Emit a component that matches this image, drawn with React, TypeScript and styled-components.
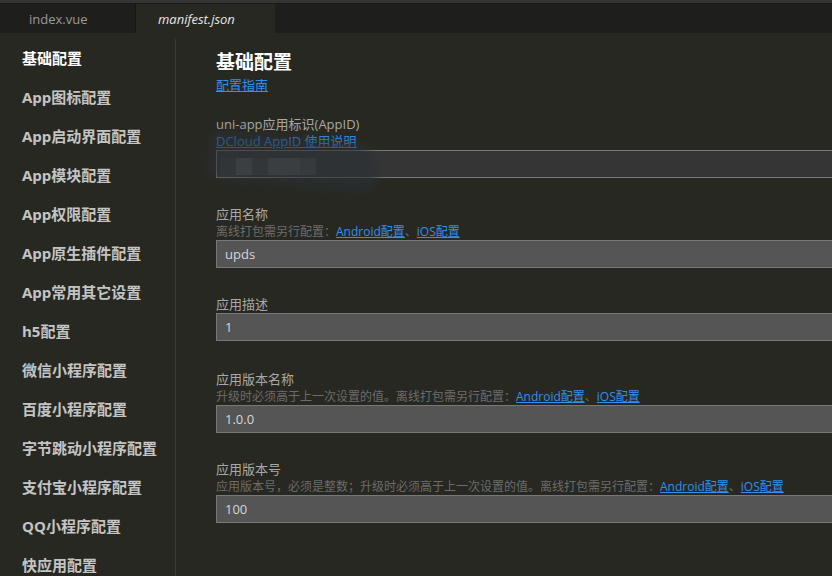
import React from 'react';
import styled, { createGlobalStyle } from 'styled-components';

const GlobalStyle = createGlobalStyle`
  html, body {
    margin: 0;
    padding: 0;
    background: #272822;
    overflow: hidden;
  }
  body {
    font-family: "Open Sans", "Noto Sans CJK SC", sans-serif;
  }
`;

const Window = styled.div`
  width: 832px;
  height: 576px;
  display: flex;
  flex-direction: column;
  background: #272822;
  overflow: hidden;
`;

const TopStrip = styled.div`
  height: 3px;
  background: #343434;
  border-bottom: 1px solid #1a1a18;
`;

const TabBar = styled.div`
  height: 29px;
  display: flex;
  background: #1e1f1c;
`;

const Tab = styled.div<{ $active?: boolean }>`
  box-sizing: border-box;
  width: ${(p) => (p.$active ? '139px' : '136px')};
  padding-left: ${(p) => (p.$active ? '22px' : '29px')};
  display: flex;
  align-items: center;
  font-size: 13px;
  font-style: ${(p) => (p.$active ? 'italic' : 'normal')};
  color: ${(p) => (p.$active ? '#e6e6e6' : '#9a9a9a')};
  background: ${(p) => (p.$active ? '#272822' : '#1e1f1c')};
  border-right: 1px solid ${(p) => (p.$active ? '#272822' : '#151613')};
`;

const Body = styled.div`
  flex: 1;
  display: flex;
  min-height: 0;
`;

const Sidebar = styled.nav`
  width: 175px;
  flex: 0 0 175px;
  padding-top: 6px;
  display: flex;
  flex-direction: column;
  border-right: 1px solid #3b3c37;
  margin-top: 6px;
`;

const NavItem = styled.div<{ $active?: boolean }>`
  height: 39px;
  line-height: 39px;
  padding-left: 22px;
  font-size: 15px;
  font-weight: bold;
  white-space: nowrap;
  color: ${(p) => (p.$active ? '#ffffff' : '#c4c4c4')};
  margin-top: ${(p) => (p.$active ? '-6px' : '0')};
`;

const Main = styled.main`
  flex: 1;
  min-width: 0;
  padding: 17px 0 0 40px;
`;

const Title = styled.h1`
  margin: 0;
  font-size: 19px;
  line-height: 24px;
  font-weight: bold;
  color: #ffffff;
`;

const Link = styled.a`
  color: #3190f0;
  text-decoration: underline;
  cursor: pointer;
`;

const GuideLink = styled(Link)`
  display: block;
  font-size: 13px;
  line-height: 18px;
  margin-top: 2px;
`;

const Field = styled.div<{ $gap?: number }>`
  margin-top: ${(p) => p.$gap ?? 28}px;
  position: relative;
`;

const Label = styled.div`
  font-size: 13px;
  line-height: 17px;
  color: #a8a8a8;
`;

const Hint = styled.div`
  font-size: 12px;
  line-height: 17px;
  color: #6c6c6c;
  white-space: nowrap;
`;

const HintLink = styled.div`
  font-size: 13px;
  line-height: 17px;
  white-space: nowrap;
`;

const Input = styled.div<{ $dim?: boolean }>`
  box-sizing: border-box;
  width: 640px;
  height: 28px;
  padding-left: 8px;
  display: flex;
  align-items: center;
  font-size: 13px;
  color: #d6d6d6;
  background: ${(p) => (p.$dim ? '#353535' : '#555555')};
  border: 1px solid #787878;
  border-right: none;
  position: relative;
`;

const Mosaic = styled.div`
  display: flex;
  height: 17px;
  margin-left: -5px;
  margin-top: 4px;
`;

const Cell = styled.div<{ $c: string; $w: number }>`
  width: ${(p) => p.$w}px;
  height: 17px;
  background: ${(p) => p.$c};
`;

const Smudge = styled.div`
  position: absolute;
  left: -8px;
  top: -14px;
  width: 170px;
  height: 48px;
  border-radius: 24px 70px 40px 24px;
  background: rgba(44, 48, 54, 0.6);
  filter: blur(4px);
  transform: rotate(5deg);
  pointer-events: none;
`;

const navItems = [
  '基础配置',
  'App图标配置',
  'App启动界面配置',
  'App模块配置',
  'App权限配置',
  'App原生插件配置',
  'App常用其它设置',
  'h5配置',
  '微信小程序配置',
  '百度小程序配置',
  '字节跳动小程序配置',
  '支付宝小程序配置',
  'QQ小程序配置',
  '快应用配置',
];

const PlatformLinks: React.FC<{ prefix: string }> = ({ prefix }) => (
  <Hint>
    {prefix}
    <Link>Android配置</Link>、<Link>iOS配置</Link>
  </Hint>
);

const App: React.FC = () => {
  return (
    <Window>
      <GlobalStyle />
      <TopStrip />
      <TabBar>
        <Tab>index.vue</Tab>
        <Tab $active>manifest.json</Tab>
      </TabBar>
      <Body>
        <Sidebar>
          {navItems.map((item, i) => (
            <NavItem key={item} $active={i === 0}>
              {item}
            </NavItem>
          ))}
        </Sidebar>
        <Main>
          <Title>基础配置</Title>
          <GuideLink>配置指南</GuideLink>

          <Field $gap={22}>
            <Label>uni-app应用标识(AppID)</Label>
            <HintLink>
              <Link>DCloud AppID 使用说明</Link>
            </HintLink>
            <Input $dim>
              <Mosaic>
                <Cell $c="#3c3c3c" $w={16} />
                <Cell $c="#545454" $w={16} />
                <Cell $c="#3f3f3f" $w={16} />
                <Cell $c="#525252" $w={32} />
                <Cell $c="#484848" $w={16} />
              </Mosaic>
              <Smudge />
            </Input>
          </Field>

          <Field>
            <Label>应用名称</Label>
            <PlatformLinks prefix="离线打包需另行配置：" />
            <Input>upds</Input>
          </Field>

          <Field>
            <Label>应用描述</Label>
            <Input>1</Input>
          </Field>

          <Field $gap={30}>
            <Label>应用版本名称</Label>
            <PlatformLinks prefix="升级时必须高于上一次设置的值。离线打包需另行配置：" />
            <Input>1.0.0</Input>
          </Field>

          <Field>
            <Label>应用版本号</Label>
            <PlatformLinks prefix="应用版本号，必须是整数；升级时必须高于上一次设置的值。离线打包需另行配置：" />
            <Input>100</Input>
          </Field>
        </Main>
      </Body>
    </Window>
  );
};

export default App;
